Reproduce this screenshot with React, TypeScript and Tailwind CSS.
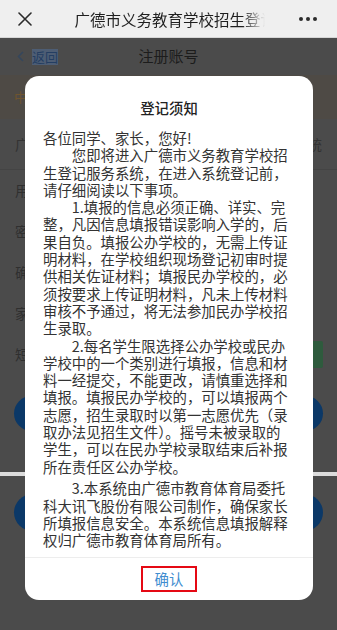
const FONT = "font-['Noto_Sans_CJK_SC','Noto_Sans',sans-serif]";

const paragraphs: {lines: string[]; extra?: boolean}[] = [
    {lines: ["各位同学、家长，您好!"]},
    {lines: ["您即将进入广德市义务教育学校招", "生登记服务系统，在进入系统登记前，", "请仔细阅读以下事项。"]},
    {
        lines: [
            "1.填报的信息必须正确、详实、完",
            "整，凡因信息填报错误影响入学的，后",
            "果自负。填报公办学校的，无需上传证",
            "明材料，在学校组织现场登记初审时提",
            "供相关佐证材料；填报民办学校的，必",
            "须按要求上传证明材料，凡未上传材料",
            "审核不予通过，将无法参加民办学校招",
            "生录取。",
        ],
    },
    {
        lines: [
            "2.每名学生限选择公办学校或民办",
            "学校中的一个类别进行填报，信息和材",
            "料一经提交，不能更改，请慎重选择和",
            "填报。填报民办学校的，可以填报两个",
            "志愿，招生录取时以第一志愿优先（录",
            "取办法见招生文件）。摇号未被录取的",
            "学生，可以在民办学校录取结束后补报",
            "所在责任区公办学校。",
        ],
    },
    {
        lines: [
            "3.本系统由广德市教育体育局委托",
            "科大讯飞股份有限公司制作，确保家长",
            "所填报信息安全。本系统信息填报解释",
            "权归广德市教育体育局所有。",
        ],
        extra: true,
    },
];

const formLabels = ["用户名", "密码", "确认密码", "家长姓名", "短信验证码"];

function TopBar() {
    return (
        <div className="h-[38px] bg-[#efefef] border-b border-[#d6d6d6] flex items-center px-[18px]">
            <svg width="14" height="14" viewBox="0 0 14 14" className="shrink-0">
                <path d="M1 1 13 13M13 1 1 13" stroke="#2b2b2b" strokeWidth="1.6" strokeLinecap="round"/>
            </svg>
            <div className="flex-1 flex justify-center pl-[8px]">
                <span
                    className="w-[190px] overflow-hidden whitespace-nowrap text-[15.5px] leading-[20px] bg-gradient-to-r from-[#1f1f1f] from-[88%] to-transparent bg-clip-text text-transparent">
                    广德市义务教育学校招生登记系统
                </span>
            </div>
            <div className="flex gap-[3px] pr-[2px]">
                <span className="w-[4px] h-[4px] rounded-full bg-[#2b2b2b]"/>
                <span className="w-[4px] h-[4px] rounded-full bg-[#2b2b2b]"/>
                <span className="w-[4px] h-[4px] rounded-full bg-[#2b2b2b]"/>
            </div>
        </div>
    );
}

function DimPage() {
    return (
        <div className="bg-[#4b4b4b] h-[592px] flex flex-col">
            <div className="h-[37px] relative flex items-center px-[17px]">
                <svg width="7" height="11" viewBox="0 0 7 11">
                    <path d="M6 1 1.5 5.5 6 10" fill="none" stroke="#34465c" strokeWidth="1.5"/>
                </svg>
                <span className="ml-[8px] bg-[#4d5d74] text-[#243e62] text-[13px] leading-[16px]">返回</span>
                <span className="absolute left-0 right-0 text-center text-[15px] text-[#1c1c1c] pointer-events-none">
                    注册账号
                </span>
            </div>
            <div className="h-[44px] bg-[#4e4a45] flex items-center px-[14px]">
                <span className="text-[13px] text-[#6e5430]">中</span>
            </div>
            <div className="h-[51px] flex items-center justify-between px-[15px] border-b border-[#444]">
                <span className="text-[14px] text-[#333]">广德市义务教育学校招生登记服务系统</span>
                <span className="text-[14px] text-[#333]">统</span>
            </div>
            {formLabels.map((label, i) => (
                <div key={label} className="h-[41px] flex items-center justify-between px-[15px]">
                    <span className="text-[14px] text-[#2f2f2f]">{label}</span>
                    {i === formLabels.length - 1 && (
                        <span className="w-[80px] h-[27px] rounded-[2px] bg-[#2e5b3d] mr-[-1px]"/>
                    )}
                </div>
            ))}
            <div className="mt-[21px] mx-[14px] h-[35px] rounded-full bg-[#0b3867]"/>
            <div className="mt-[41px] h-[4px] bg-[#dcdcdc]"/>
            <div className="mt-[18px] mx-[14px] h-[37px] rounded-full bg-[#0b3867]"/>
        </div>
    );
}

function NoticeModal() {
    return (
        <div className="absolute left-[25px] top-[76px] w-[288px] bg-white rounded-[14px] overflow-hidden">
            <div className="pt-[22px] text-center text-[14.4px] leading-[20px] font-medium text-[#222]">
                登记须知
            </div>
            <div className="mt-[11px] pl-[18px] pr-[24px] pb-[8px] text-[14.4px] leading-[17.3px] text-[#333]">
                {paragraphs.map((p, pi) => (
                    <div key={pi} className={p.extra ? "mt-[4.5px]" : ""}>
                        {p.lines.map((line, li) => (
                            <div key={li}
                                 className={`whitespace-nowrap ${li === 0 && pi > 0 ? "pl-[2em]" : ""}`}>
                                {line}
                            </div>
                        ))}
                    </div>
                ))}
            </div>
            <div className="border-t border-[#ededed] h-[43px] flex items-center justify-center">
                <button
                    className="h-[26px] w-[56px] border-2 border-[#e50914] text-[#3f8dcf] text-[14.4px] leading-[20px] flex items-center justify-center">
                    确认
                </button>
            </div>
        </div>
    );
}

export default function App() {
    return (
        <div className={`w-[337px] h-[630px] overflow-hidden relative bg-[#4b4b4b] ${FONT}`}>
            <TopBar/>
            <DimPage/>
            <NoticeModal/>
        </div>
    );
}
